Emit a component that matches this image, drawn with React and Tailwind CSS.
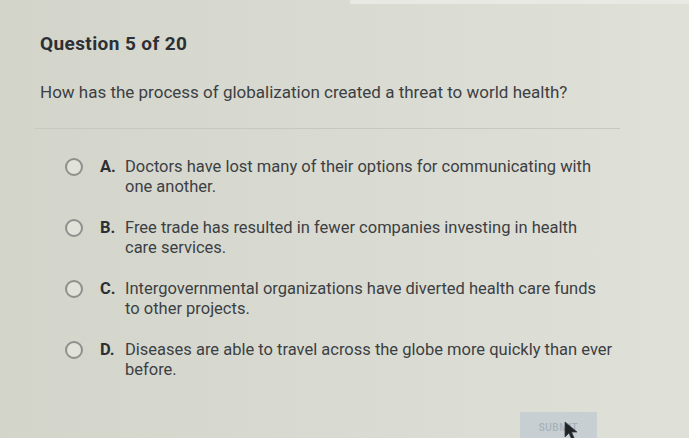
import React from "react";

const options = [
  { letter: "A.", lines: ["Doctors have lost many of their options for communicating with", "one another."] },
  { letter: "B.", lines: ["Free trade has resulted in fewer companies investing in health", "care services."] },
  { letter: "C.", lines: ["Intergovernmental organizations have diverted health care funds", "to other projects."] },
  { letter: "D.", lines: ["Diseases are able to travel across the globe more quickly than ever", "before."] },
];

export default function App() {
  return (
    <div
      className="w-[689px] h-[438px] overflow-hidden bg-gradient-to-r from-[#d3d5cb] to-[#dfe0d8] text-[#3c3f43] relative"
      style={{ fontFamily: "Roboto, 'Liberation Sans', sans-serif" }}
    >
      {/* lighter strip along the top edge */}
      <div className="h-[4px] ml-[350px] bg-[#e8e9e3]" />

      <div className="pl-[40px] pt-[28px]">
        <h1 className="text-[19px] leading-[24px] font-bold tracking-[0.4px] text-[#2c2f34]">Question 5 of 20</h1>
        <p className="mt-[24px] text-[17px] leading-[24px] text-[#3c3f43]">
          How has the process of globalization created a threat to world health?
        </p>
        <div className="mt-[24px] -ml-[5px] w-[585px] h-px bg-[#c7c9bf]" />

        <div className="mt-[28px] ml-[25px] flex flex-col gap-[21px]">
          {options.map((o) => (
            <div key={o.letter} className="flex items-start">
              <div className="mt-[1px] w-[18px] h-[18px] rounded-full border-2 border-[#8e908b] bg-[#e1e2da] shrink-0" />
              <span className="ml-[17px] w-[25px] text-[16.5px] leading-[20px] font-bold text-[#2c2f34]">{o.letter}</span>
              <div className="text-[16.5px] leading-[20px] text-[#3c3f43]">
                <div>{o.lines[0]}</div>
                <div>{o.lines[1]}</div>
              </div>
            </div>
          ))}
        </div>
      </div>

      <div className="absolute left-[520px] top-[412px] w-[77px] h-[30px] bg-[#c7cfd2] flex items-center justify-center text-[10px] tracking-[0.5px] font-medium text-[#a6b1b9]">
        SUBMIT
      </div>
      {/* mouse pointer */}
      <svg className="absolute left-[564px] top-[421px]" width="14" height="20" viewBox="0 0 14 20">
        <path d="M1 1 L1 16 L5 12 L8 19 L10.5 18 L7.5 11 L13 11 Z" fill="#1f2226" stroke="#3a3d40" strokeWidth="0.8" />
      </svg>
    </div>
  );
}
